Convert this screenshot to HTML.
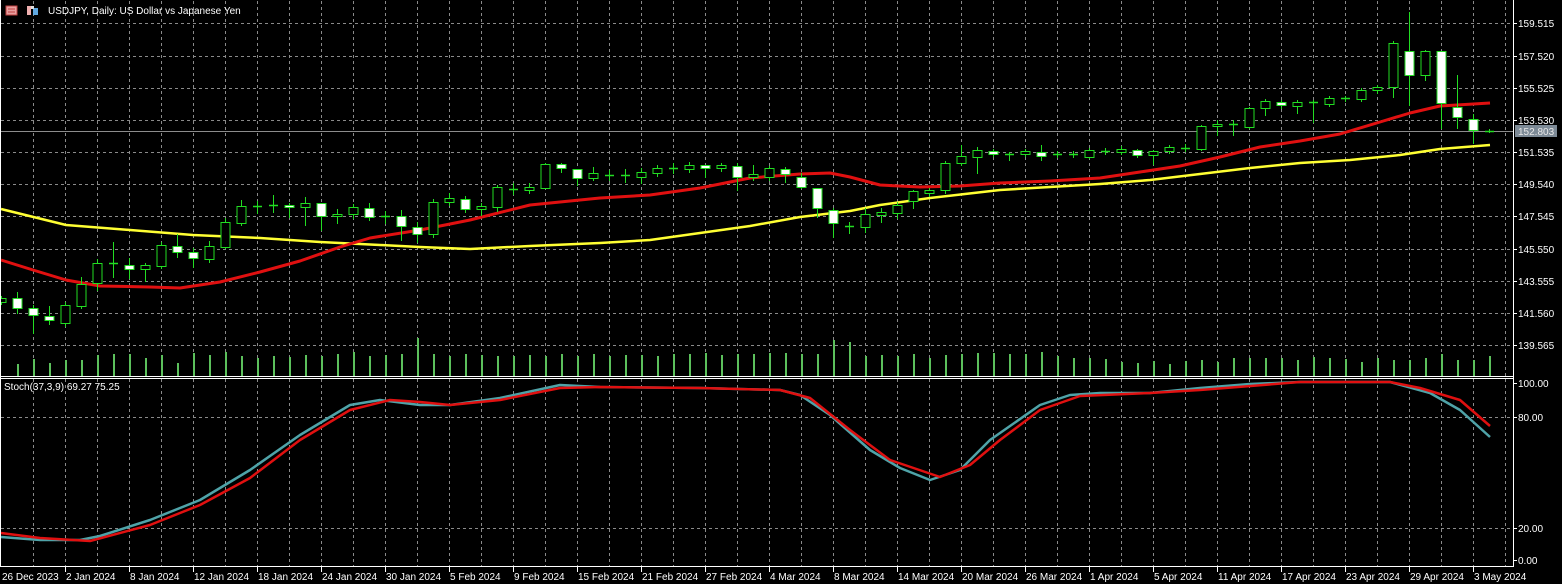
<!DOCTYPE html>
<html><head><meta charset="utf-8"><style>
html,body{margin:0;padding:0;background:#000;width:1562px;height:584px;overflow:hidden}
svg{display:block}
text{font-family:"Liberation Sans",sans-serif;font-size:10px;fill:#fff}
</style></head><body>
<svg id="s" width="1562" height="584" xmlns="http://www.w3.org/2000/svg">
<rect width="1562" height="584" fill="#000"/>
<g id="grid" stroke="#8a8a8a" stroke-width="1" stroke-dasharray="3,3" fill="none"></g>
<line x1="1" y1="131.5" x2="1513" y2="131.5" stroke="#8c8c8c"/>
<g id="vol"></g>
<polyline id="yel" fill="none" stroke="#ffff33" stroke-width="2.5" stroke-linejoin="round"/>
<polyline id="red" fill="none" stroke="#e01010" stroke-width="3" stroke-linejoin="round"/>
<g id="cand"></g>
<polyline id="st1" fill="none" stroke="#4fa3a8" stroke-width="2.5" stroke-linejoin="round"/>
<polyline id="st2" fill="none" stroke="#e01010" stroke-width="2.5" stroke-linejoin="round"/>
<!-- frame -->
<g stroke="#fff" stroke-width="1" fill="none">
<line x1="0.5" y1="0" x2="0.5" y2="566"/>
<line x1="1513.5" y1="0" x2="1513.5" y2="566"/>
<line x1="0" y1="376.5" x2="1513" y2="376.5"/>
<line x1="0" y1="378.5" x2="1513" y2="378.5"/>
<line x1="0" y1="566.5" x2="1514" y2="566.5"/>
</g>
<g id="ticks" stroke="#fff"></g>
<!-- header -->
<rect x="6" y="6" width="11" height="9" fill="#e8a0a0" stroke="#c04040"/>
<line x1="8" y1="9" x2="15" y2="9" stroke="#c04040"/><line x1="8" y1="12" x2="15" y2="12" stroke="#c04040"/>
<rect x="27" y="6" width="4" height="9" fill="#f0b0b0"/><rect x="33" y="8" width="5" height="7" fill="#60a8e0"/><rect x="31" y="6" width="3" height="3" fill="#ddd"/>
<text x="48" y="14">USDJPY, Daily:  US Dollar vs Japanese Yen</text>
<text x="4" y="390">Stoch(37,3,9) 69.27 75.25</text>
<!-- price labels -->
<text x="1518" y="27">159.515</text>
<text x="1518" y="60">157.520</text>
<text x="1518" y="92">155.525</text>
<text x="1518" y="124">153.530</text>
<text x="1518" y="156">151.535</text>
<text x="1518" y="188">149.540</text>
<text x="1518" y="220">147.545</text>
<text x="1518" y="253">145.550</text>
<text x="1518" y="285">143.555</text>
<text x="1518" y="317">141.560</text>
<text x="1518" y="349">139.565</text>
<rect x="1515" y="125" width="42" height="12" fill="#7d8a96"/>
<text x="1518" y="135" style="fill:#e8e8e8">152.803</text>
<text x="1518" y="387">100.00</text>
<text x="1518" y="421">80.00</text>
<text x="1518" y="532">20.00</text>
<text x="1518" y="564">0.00</text>
<!-- dates -->
<text x="2" y="580">26 Dec 2023</text>
<text x="66" y="580">2 Jan 2024</text>
<text x="130" y="580">8 Jan 2024</text>
<text x="194" y="580">12 Jan 2024</text>
<text x="258" y="580">18 Jan 2024</text>
<text x="322" y="580">24 Jan 2024</text>
<text x="386" y="580">30 Jan 2024</text>
<text x="450" y="580">5 Feb 2024</text>
<text x="514" y="580">9 Feb 2024</text>
<text x="578" y="580">15 Feb 2024</text>
<text x="642" y="580">21 Feb 2024</text>
<text x="706" y="580">27 Feb 2024</text>
<text x="770" y="580">4 Mar 2024</text>
<text x="834" y="580">8 Mar 2024</text>
<text x="898" y="580">14 Mar 2024</text>
<text x="962" y="580">20 Mar 2024</text>
<text x="1026" y="580">26 Mar 2024</text>
<text x="1090" y="580">1 Apr 2024</text>
<text x="1154" y="580">5 Apr 2024</text>
<text x="1218" y="580">11 Apr 2024</text>
<text x="1282" y="580">17 Apr 2024</text>
<text x="1346" y="580">23 Apr 2024</text>
<text x="1410" y="580">29 Apr 2024</text>
<text x="1474" y="580">3 May 2024</text>
</svg>
<script>
var NS="http://www.w3.org/2000/svg";
function el(p,n,a){var e=document.createElementNS(NS,n);for(var k in a)e.setAttribute(k,a[k]);document.getElementById(p).appendChild(e);return e;}
// grid
for(var x=33;x<1513;x+=32){el("grid","line",{x1:x+.5,y1:1,x2:x+.5,y2:376});el("grid","line",{x1:x+.5,y1:379,x2:x+.5,y2:566});}
[23,56,88,120,152,184,216,249,281,313,345].forEach(function(y){el("grid","line",{x1:1,y1:y+.5,x2:1513,y2:y+.5});el("ticks","line",{x1:1513,y1:y+.5,x2:1517,y2:y+.5});});
[417,528].forEach(function(y){el("grid","line",{x1:1,y1:y+.5,x2:1513,y2:y+.5});});
[383,417,528,560].forEach(function(y){el("ticks","line",{x1:1513,y1:y+.5,x2:1517,y2:y+.5});});
for(var x=65;x<1513;x+=64){el("ticks","line",{x1:x+.5,y1:566,x2:x+.5,y2:572});}
// candles [k,type,top,bot,wt,wb]
var C=[[0,'b',298,302,296,304],[1,'w',298,308,292,313],[2,'w',308,315,305,333],[3,'w',316,320,306,324],[4,'b',305,323,302,326],[5,'b',284,306,277,308],[6,'b',263,283,259,290],[7,'d',263,263,242,277],[8,'w',265,269,258,278],[9,'b',265,269,263,281],[10,'b',245,266,242,268],[11,'w',246,252,234,257],[12,'w',252,258,248,267],[13,'b',246,259,241,262],[14,'b',222,247,218,248],[15,'b',206,223,200,225],[16,'d',206,206,201,213],[17,'d',205,205,195,212],[18,'w',205,207,203,217],[19,'b',203,207,197,225],[20,'w',203,216,203,230],[21,'b',214,216,209,223],[22,'b',207,214,204,218],[23,'w',208,217,203,220],[24,'d',216,216,211,223],[25,'w',216,226,210,240],[26,'w',227,234,222,242],[27,'b',202,234,199,237],[28,'b',198,202,193,205],[29,'w',199,209,196,212],[30,'b',206,209,203,215],[31,'b',187,207,185,211],[32,'d',189,189,183,194],[33,'b',187,190,183,193],[34,'b',164,188,163,188],[35,'w',164,168,163,172],[36,'w',169,178,169,185],[37,'b',173,178,167,180],[38,'d',175,175,170,180],[39,'d',175,175,169,182],[40,'b',172,177,168,183],[41,'b',168,173,165,176],[42,'d',168,168,163,173],[43,'b',165,169,162,172],[44,'w',165,168,165,177],[45,'b',165,168,163,171],[46,'w',166,177,163,190],[47,'b',174,177,165,180],[48,'b',168,177,166,180],[49,'w',169,174,167,182],[50,'w',177,187,173,188],[51,'w',188,208,188,217],[52,'w',210,223,208,237],[53,'d',226,226,222,233],[54,'b',214,227,208,232],[55,'b',212,215,208,222],[56,'b',205,213,202,218],[57,'b',191,201,190,208],[58,'b',190,193,188,196],[59,'b',163,190,161,193],[60,'b',156,163,145,165],[61,'b',150,157,147,173],[62,'w',151,154,149,156],[63,'d',154,154,152,160],[64,'b',151,154,149,156],[65,'w',152,156,145,160],[66,'d',154,154,151,157],[67,'d',154,154,151,157],[68,'b',150,157,148,158],[69,'d',151,151,148,154],[70,'b',149,152,146,154],[71,'w',150,155,149,157],[72,'b',151,155,150,164],[73,'b',147,151,145,153],[74,'d',148,148,144,151],[75,'b',126,149,125,150],[76,'b',124,126,120,135],[77,'d',124,124,120,135],[78,'b',108,127,107,128],[79,'b',101,108,99,115],[80,'w',102,105,100,108],[81,'b',102,106,100,113],[82,'d',102,102,100,122],[83,'b',98,104,96,106],[84,'d',98,98,96,101],[85,'b',90,99,88,101],[86,'b',87,90,85,93],[87,'b',43,87,41,97],[88,'w',51,75,12,105],[89,'b',51,75,50,80],[90,'w',51,103,51,128],[91,'w',107,117,75,128],[92,'w',119,130,114,143],[93,'d',131,131,129,132]];
var G="#22dd22";
C.forEach(function(c){var x=1+16*c[0];
 el("cand","line",{x1:x+.5,y1:c[4],x2:x+.5,y2:c[5]+1,stroke:G});
 if(c[1]=='d'){el("cand","line",{x1:x-4,y1:c[2]+.5,x2:x+5,y2:c[2]+.5,stroke:G,"stroke-width":1.5});}
 else{el("cand","rect",{x:x-4,y:c[2]+.5,width:9,height:Math.max(1,c[3]-c[2]),fill:c[1]=='w'?"#fff":"#000",stroke:G});}
});
// volume
var V=[14,12,17,13,16,16,21,22,22,18,21,13,23,21,24,20,18,20,19,21,20,22,24,20,21,22,38,22,20,22,21,20,20,21,20,22,20,22,20,21,21,20,22,22,23,21,22,22,23,23,22,22,36,34,20,21,20,22,18,21,22,23,23,22,22,24,20,18,18,17,14,13,15,12,15,16,14,18,18,18,18,16,19,18,17,14,18,16,16,18,22,16,16,20,16];
V.forEach(function(h,k){if(k>93)return;var x=1+16*k;if(k==0)return;el("vol","rect",{x:x,y:376-h,width:2,height:h,fill:"#5cc05c"});});
function pl(id,p){document.getElementById(id).setAttribute("points",p.map(function(q){return q.join(",")}).join(" "));}
pl("red",[[1,260],[33,270],[66,280],[100,286],[150,287],[180,288],[220,282],[260,272],[300,261],[340,247],[370,238],[420,230],[470,220],[530,205],[600,198],[650,195],[700,188],[750,178],[800,174],[830,173],[850,177],[880,185],[920,187],[960,186],[1000,183],[1050,181],[1100,178],[1140,172],[1180,166],[1220,157],[1260,147],[1300,141],[1340,134],[1380,122],[1410,113],[1440,106],[1490,103]]);
pl("yel",[[1,209],[66,225],[130,230],[193,235],[260,238],[320,242],[380,245],[420,247],[470,249],[530,246],[600,243],[650,240],[700,233],[750,226],[800,217],[850,211],[880,205],[930,198],[1000,190],[1050,187],[1100,184],[1150,180],[1200,174],[1250,168],[1300,163],[1350,160],[1400,155],[1440,149],[1490,145]]);
pl("st1",[[1,537],[40,540],[80,540],[100,536],[150,520],[200,500],[250,470],[300,435],[350,405],[380,400],[420,405],[450,405],[500,398],[560,385],[600,387],[700,388],[780,390],[800,395],[830,415],[870,450],[900,468],[930,480],[960,470],[990,440],[1040,405],[1070,395],[1100,393],[1150,393],[1200,388],[1250,384],[1300,382],[1390,382],[1430,393],[1460,410],[1490,437]]);
pl("st2",[[1,533],[40,538],[90,541],[150,525],[200,505],[250,478],[300,440],[350,410],[390,400],[420,402],[450,405],[500,400],[560,388],[600,387],[700,388],[780,390],[810,398],[850,430],[890,460],[940,477],[970,465],[1000,440],[1040,410],[1080,396],[1150,393],[1200,390],[1300,382],[1390,382],[1420,388],[1460,400],[1490,426]]);
</script>
</body></html>
